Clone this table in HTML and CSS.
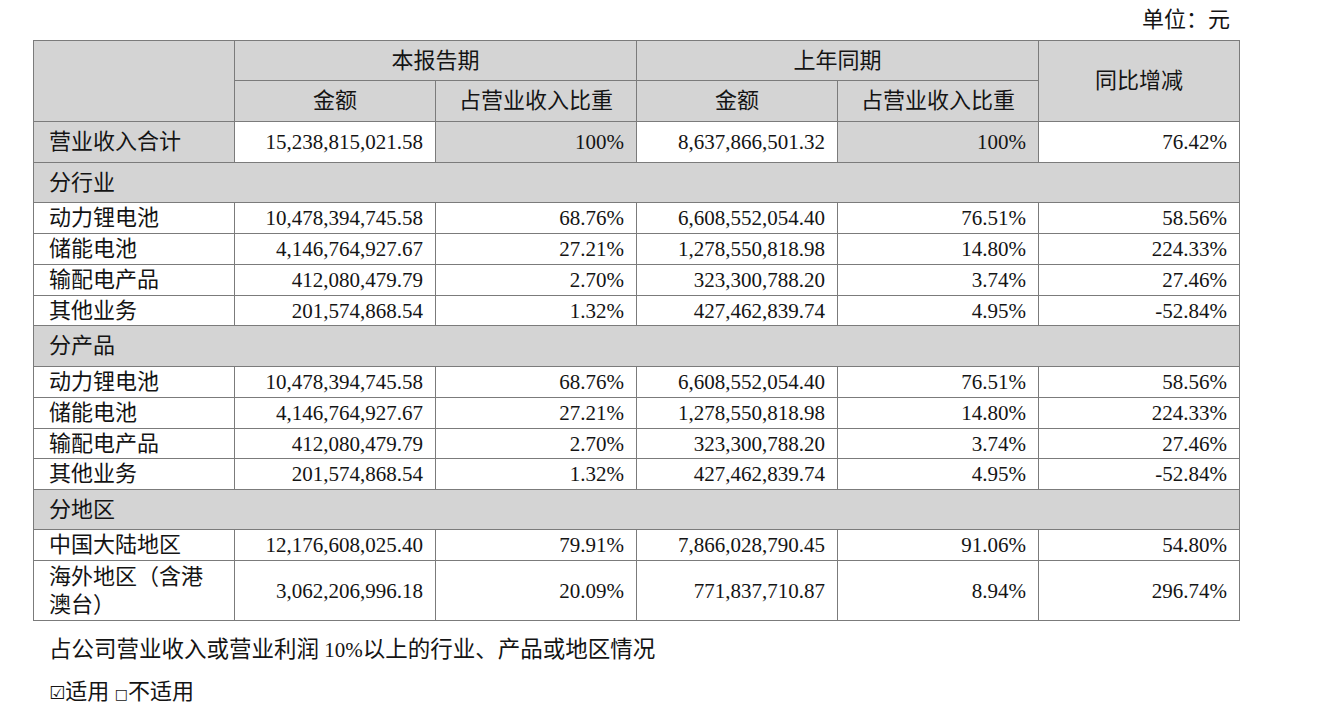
FILE: index.html
```html
<!DOCTYPE html>
<html lang="zh-CN">
<head>
<meta charset="utf-8">
<title>营业收入构成</title>
<link rel="stylesheet" href="styles.css">
</head>
<body>
<div class="page">
  <div class="unit">单位：元</div>
  <table class="report">
    <colgroup>
      <col class="c"><col class="c"><col class="c"><col class="c"><col class="c"><col class="c">
    </colgroup>
    <tr class="h1">
      <td class="g" rowspan="2"></td>
      <td class="g ctr" colspan="2">本报告期</td>
      <td class="g ctr" colspan="2">上年同期</td>
      <td class="g ctr" rowspan="2">同比增减</td>
    </tr>
    <tr class="h2">
      <td class="g ctr">金额</td>
      <td class="g ctr">占营业收入比重</td>
      <td class="g ctr">金额</td>
      <td class="g ctr">占营业收入比重</td>
    </tr>
    <tr class="tot">
      <td class="g lbl">营业收入合计</td>
      <td class="num">15,238,815,021.58</td>
      <td class="g num">100%</td>
      <td class="num">8,637,866,501.32</td>
      <td class="g num">100%</td>
      <td class="num">76.42%</td>
    </tr>
    <tr class="sec"><td class="g lbl" colspan="6">分行业</td></tr>
    <tr class="row"><td class="lbl">动力锂电池</td><td class="num">10,478,394,745.58</td><td class="num">68.76%</td><td class="num">6,608,552,054.40</td><td class="num">76.51%</td><td class="num">58.56%</td></tr>
    <tr class="row"><td class="lbl">储能电池</td><td class="num">4,146,764,927.67</td><td class="num">27.21%</td><td class="num">1,278,550,818.98</td><td class="num">14.80%</td><td class="num">224.33%</td></tr>
    <tr class="row"><td class="lbl">输配电产品</td><td class="num">412,080,479.79</td><td class="num">2.70%</td><td class="num">323,300,788.20</td><td class="num">3.74%</td><td class="num">27.46%</td></tr>
    <tr class="row r30"><td class="lbl">其他业务</td><td class="num">201,574,868.54</td><td class="num">1.32%</td><td class="num">427,462,839.74</td><td class="num">4.95%</td><td class="num">-52.84%</td></tr>
    <tr class="sec s41"><td class="g lbl" colspan="6">分产品</td></tr>
    <tr class="row"><td class="lbl">动力锂电池</td><td class="num">10,478,394,745.58</td><td class="num">68.76%</td><td class="num">6,608,552,054.40</td><td class="num">76.51%</td><td class="num">58.56%</td></tr>
    <tr class="row"><td class="lbl">储能电池</td><td class="num">4,146,764,927.67</td><td class="num">27.21%</td><td class="num">1,278,550,818.98</td><td class="num">14.80%</td><td class="num">224.33%</td></tr>
    <tr class="row r30"><td class="lbl">输配电产品</td><td class="num">412,080,479.79</td><td class="num">2.70%</td><td class="num">323,300,788.20</td><td class="num">3.74%</td><td class="num">27.46%</td></tr>
    <tr class="row"><td class="lbl">其他业务</td><td class="num">201,574,868.54</td><td class="num">1.32%</td><td class="num">427,462,839.74</td><td class="num">4.95%</td><td class="num">-52.84%</td></tr>
    <tr class="sec"><td class="g lbl" colspan="6">分地区</td></tr>
    <tr class="row"><td class="lbl">中国大陆地区</td><td class="num">12,176,608,025.40</td><td class="num">79.91%</td><td class="num">7,866,028,790.45</td><td class="num">91.06%</td><td class="num">54.80%</td></tr>
    <tr class="tall"><td class="lbl wrap">海外地区（含港澳台）</td><td class="num">3,062,206,996.18</td><td class="num">20.09%</td><td class="num">771,837,710.87</td><td class="num">8.94%</td><td class="num">296.74%</td></tr>
  </table>
  <p class="note"><span class="zh">占公司营业收入或营业利润</span> 10%<span class="zh">以上的行业、产品或地区情况</span></p>
  <p class="opt"><span class="chk">☑</span>适用 <span class="box">□</span>不适用</p>
</div>
</body>
</html>
```

FILE: styles.css
```css
html, body {
  margin: 0;
  padding: 0;
  background: #ffffff;
}

body {
  font-family: "Liberation Serif", "Noto Sans CJK SC", serif;
  font-size: 21px;
  color: #141414;
}

.page {
  padding: 0 0 0 33px;
  width: 1207px;
}

.unit {
  text-align: right;
  padding-right: 10px;
  height: 40px;
  line-height: 40px;
  font-size: 22px;
}

.report {
  border-collapse: collapse;
  table-layout: fixed;
  width: 1207px;
}

.report .c {
  width: 201px;
}

.report td {
  border: 1px solid #7b7b7b;
  padding: 0;
  line-height: 24px;
  white-space: nowrap;
  overflow: hidden;
  background: #ffffff;
}

.report td.g {
  background: #d4d4d4;
}

.report td.ctr {
  text-align: center;
  font-size: 22px;
}

.report td.lbl {
  text-align: left;
  padding-left: 15px;
  font-size: 22px;
}

.report td.num {
  text-align: right;
  padding-right: 12px;
}

.report td.wrap {
  white-space: normal;
  padding-right: 20px;
  line-height: 28px;
}

.h1 td { height: 39px; }
.h2 td { height: 40px; }
.tot td { height: 40px; }
.sec td { height: 39px; }
.s41 td { height: 40px; }
.row td { height: 30px; }
.r30 td { height: 29px; }
.tall td { height: 59px; }

.note {
  margin: 0;
  padding: 14px 0 0 16px;
  height: 42px;
  line-height: 30px;
}

.zh {
  font-size: 22.5px;
}

.opt {
  margin: 0;
  padding: 0 0 0 16px;
  line-height: 30px;
  font-size: 22px;
}

.chk {
  font-family: "DejaVu Sans", sans-serif;
  font-size: 18px;
}

.box {
  font-family: "DejaVu Sans", sans-serif;
  font-size: 14px;
}
```
